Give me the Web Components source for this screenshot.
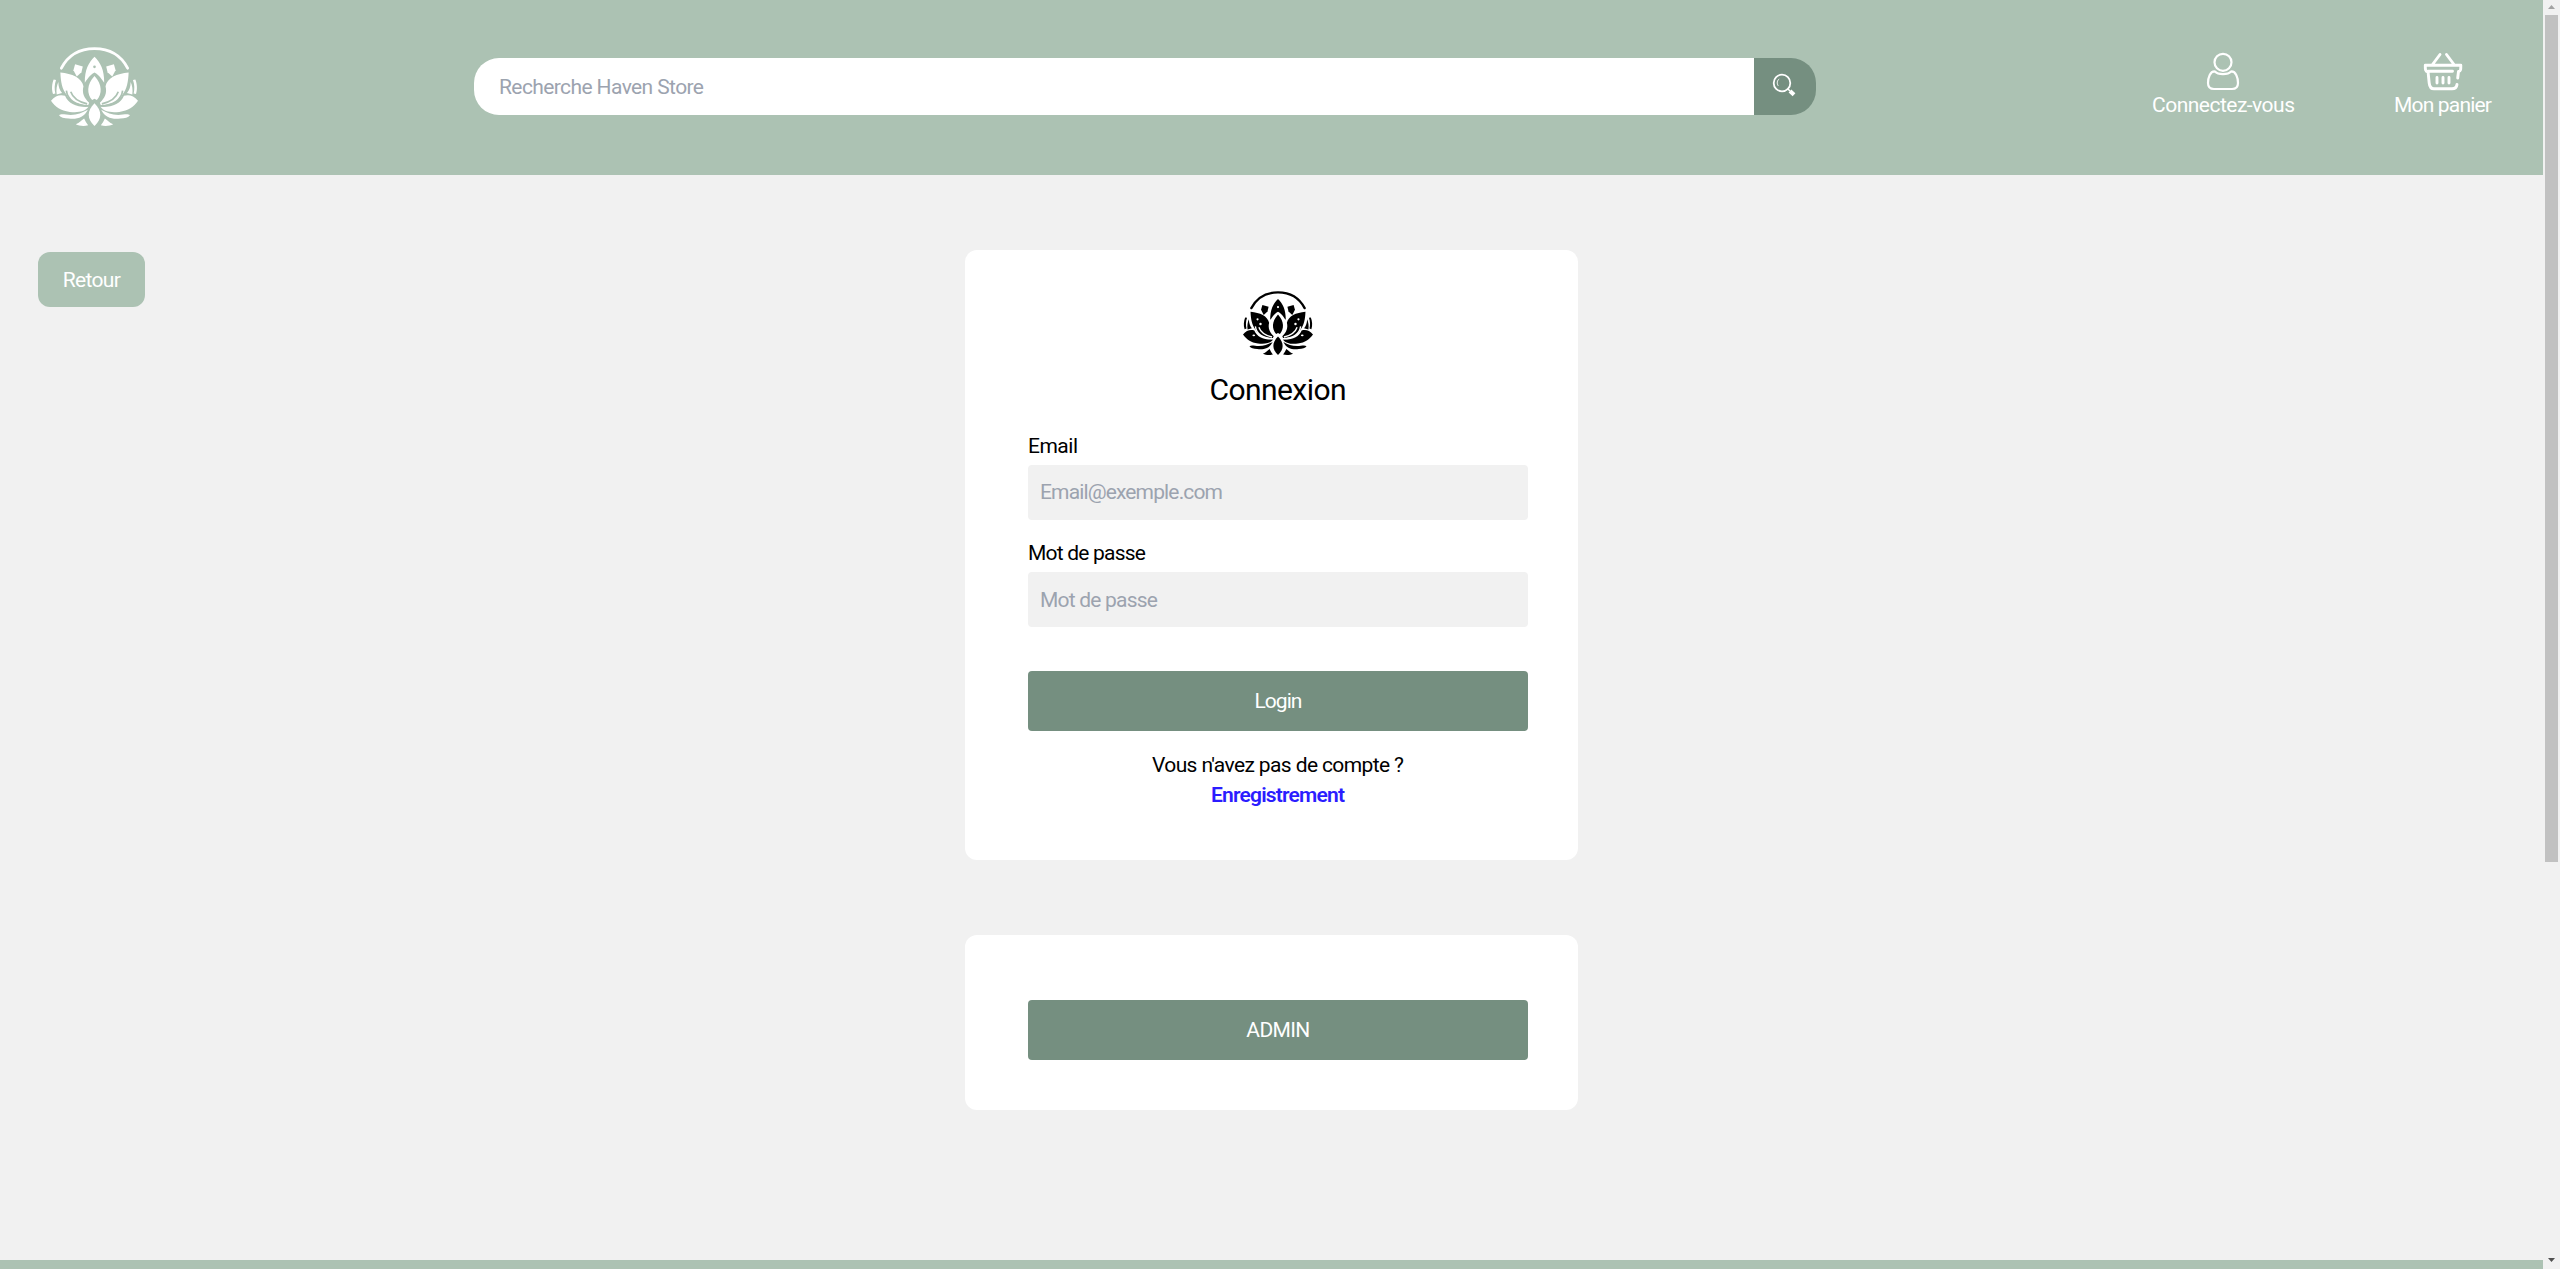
<!DOCTYPE html>
<html lang="fr">
<head>
<meta charset="utf-8">
<title>Haven Store</title>
<style>
html,body{margin:0;height:100%;overflow:hidden;background:#f1f1f1}
body{font-family:Roboto,"Liberation Sans",sans-serif;font-size:21px;line-height:30px;color:#000;--sage:#acc2b3;--moss:#758f80;--pale:#f1f1f1}
</style>
</head>
<body>
<haven-app></haven-app>
<script>
const define = (name, html, init) => customElements.define(name, class extends HTMLElement {
  connectedCallback() {
    if (this.shadowRoot) return;
    this.attachShadow({mode: 'open'}).innerHTML = html;
    if (init) init.call(this);
  }
});

// One line of text, tracked so that its letters span the given width.
define('fit-text', `<style>:host{display:block;white-space:nowrap;height:30px;flex:none}span{display:inline-block}</style><span><slot></slot></span>`, function () {
  const s = this.shadowRoot.querySelector('span');
  const n = this.textContent.length, w = +this.getAttribute('width');
  this.style.width = w + 'px';
  s.style.letterSpacing = (w - s.getBoundingClientRect().width) / (n - 1) + 'px';
});

define('lotus-logo', `<style>:host{display:block;flex:none}svg{display:block;width:100%;height:100%}</style>
<svg viewBox="35 36 260 235" preserveAspectRatio="none" fill="currentColor">
<defs>
<mask id="m" maskUnits="userSpaceOnUse" x="0" y="0" width="330" height="300"><rect width="330" height="300" fill="#fff"/>
<g fill="none" stroke="#000" stroke-width="5"><path d="M81 166C84 192 107 210 147 211"/><path d="M94 169C100 187 117 199 143 205"/></g>
<circle cx="89" cy="140" r="4"/><circle cx="100" cy="157" r="4.5"/><ellipse cx="75" cy="199" rx="5" ry="3"/></mask>
<g id="h"><g mask="url(#m)">
<path d="M63 112C98 115 127 128 132 153C127 173 134 188 149 202L146 209C117 208 91 199 82 178C68 162 64 139 63 112Z"/>
<path d="M35 196C48 180 62 177 77 181C86 204 112 216 147 214C137 229 114 232 91 229C64 226 48 214 35 196Z"/></g>
<path d="M107 87L130 94L126 111L112 124L102 105Z"/>
<path d="M41 176C36 162 38 145 43 133L50 134C45 148 45 162 48 174Z"/>
<path d="M57 140C57 155 61 164 68 173L52 177C50 163 52 151 57 140Z"/>
<path d="M59 239C66 233 78 238 94 238C114 238 128 232 145 223C134 247 111 252 88 249C74 248 64 246 59 239Z"/>
<path d="M109 266C121 262 125 254 134 249C137 256 141 263 146 269C134 272 119 271 109 266Z"/></g>
</defs>
<path d="M66 99C87 59 124 41 165 41S243 59 264 99" fill="none" stroke="currentColor" stroke-width="8.5" stroke-linecap="round"/>
<path fill-rule="evenodd" d="M165 65C147 83 136 103 136 142C145 132 146 123 165 112C184 123 185 132 194 142C194 103 183 83 165 65ZM165 91a4 4 0 1 1 0 8a4 4 0 0 1 0-8Z"/>
<path d="M165 122C141 148 142 175 158 194L165 190L172 194C188 175 189 148 165 122Z"/>
<path d="M165 203C142 226 142 250 165 271C188 250 188 226 165 203Z"/>
<use href="#h"/><use href="#h" transform="matrix(-1 0 0 1 330 0)"/>
</svg>`);

define('search-bar', `<style>:host{display:flex;width:1342px;height:57px;border-radius:25px;overflow:hidden}
.f{flex:1;background:#fff;color:#9ca3af;padding:14px 0 0 25px}
button{width:62px;border:0;padding:0 2px 3px 0;background:var(--moss);color:#fff;display:grid;place-items:center}svg{display:block}</style>
<div class="f"><fit-text width="205">Recherche Haven Store</fit-text></div>
<button aria-label="Rechercher"><svg width="24" height="24" viewBox="0 0 24 24" fill="none" stroke="#fff"><circle cx="10" cy="10" r="8.3" stroke-width="1.8"/><path d="M6.2 12.8C4.5 10 5.3 7.2 7.2 6" stroke-width="1"/><path d="M15.5 15.5L18 18" stroke-width="1.5"/><path d="M18 18L22 21.7" stroke-width="4"/></svg></button>`);

define('nav-link', `<style>:host{display:flex;flex-direction:column;align-items:center;color:#fff}::slotted(svg){display:block;margin:0 1px -1px 0}</style><slot name="icon"></slot><slot></slot>`);

define('site-header', `<style>:host{display:flex;box-sizing:border-box;height:175px;background:var(--sage);align-items:flex-start}
lotus-logo{width:87px;height:79px;margin:47px 336px 0 51px;color:#fff}search-bar{margin-top:58px}
nav{display:flex;gap:99px;margin:52px 0 0 336px}</style>
<lotus-logo></lotus-logo><search-bar></search-bar>
<nav><nav-link><svg slot="icon" width="34" height="39" viewBox="0 0 34 39" fill="none" stroke="#fff" stroke-width="2.2"><circle cx="17" cy="10.3" r="8.5"/><path d="M9 19.5C12 23 22 23 25 19.5C30 19 32 26 32 31C32 35 30 37 26 37H8C4 37 2 35 2 31C2 26 4 19 9 19.5Z" stroke-linejoin="round"/></svg><fit-text width="143">Connectez-vous</fit-text></nav-link>
<nav-link><svg slot="icon" width="40" height="39" viewBox="0 0 40 39" fill="none" stroke="#fff" stroke-width="2.9" stroke-linecap="round" stroke-linejoin="round"><path d="M17 2.5L9.5 12.5M23.5 2.5L31 12.5M5 20C2 19.5 2.3 17 2.3 13.3H37.8C37.8 16.5 38 19.5 35.5 19.5L34.7 26M29.5 19.3H5L6.2 31C6.6 35 7.8 36.8 11 36.8H29C32 36.8 33.6 35.8 34 32.5"/><path d="M14 25.5V31M20 25.5V31M26 25.5V31"/></svg><fit-text width="98">Mon panier</fit-text></nav-link></nav>`);

define('panel-card', `<style>:host{display:flex;flex-direction:column;align-items:center;box-sizing:border-box;width:613px;background:#fff;border-radius:12px;padding:0 50px 0 63px}</style><slot></slot>`);

define('form-field', `<style>:host{display:block;width:500px;flex:none}.i{height:55px;box-sizing:border-box;background:var(--pale);border-radius:4px;color:#9ca3af;padding:12px 12px;margin-top:4px}:host(.second) .i{padding-top:13px}</style><slot name="label"></slot><div class="i"><slot></slot></div>`);

define('main-button', `<style>:host{display:block;width:500px;flex:none}button{display:flex;width:100%;height:60px;align-items:center;justify-content:center;border:0;padding:0;border-radius:4px;background:var(--moss);color:#fff;font:inherit}</style><button><slot></slot></button>`);

define('back-button', `<style>:host{display:block;width:107px}button{width:107px;height:55px;display:flex;align-items:center;justify-content:center;border:0;padding:0;border-radius:12px;background:var(--sage);color:#fff;font:inherit}</style><button><slot></slot></button>`);

define('page-scrollbar', `<style>:host{display:flex;flex-direction:column;align-items:center;width:17px;height:100%;background:#f1f1f1;box-sizing:border-box}
svg{display:block;flex:none}.t{width:13px;height:847px;background:#c1c1c1;margin-bottom:auto}</style>
<svg width="17" height="15"><path d="M5 9L8.5 5L12 9Z" fill="#a3a3a3"/></svg><div class="t"></div><svg width="17" height="15"><path d="M5 4L8.5 8L12 4Z" fill="#505050"/></svg>`);

define('haven-app', `<style>:host{display:flex;height:1269px;width:2560px}
.page{width:2543px;display:flex;flex-direction:column}
.body{flex:1;display:grid;grid-template-columns:1fr 613px 1fr;align-items:start}
back-button{margin:77px 0 0 38px}
.cards{display:flex;flex-direction:column;gap:75px;padding-top:75px}
.login{height:610px}.admin{height:175px;padding-top:65px}
lotus-logo{width:70px;height:64px;margin-top:41px}
h1{margin:15px 0 0;font-size:30px;line-height:40px;height:40px;font-weight:400}
form-field{margin-top:18px}.first{margin-top:21px}
main-button.l{margin:44px 0 19px}
.link{color:#2b1dff;font-weight:600}
footer{height:9px;background:var(--sage)}</style>
<div class="page"><site-header></site-header>
<div class="body"><back-button><fit-text width="58">Retour</fit-text></back-button>
<div class="cards"><panel-card class="login"><lotus-logo></lotus-logo>
<h1><fit-text width="137">Connexion</fit-text></h1>
<form-field class="first"><fit-text slot="label" width="50">Email</fit-text><fit-text width="183">Email@exemple.com</fit-text></form-field>
<form-field class="second"><fit-text slot="label" width="118">Mot de passe</fit-text><fit-text width="118">Mot de passe</fit-text></form-field>
<main-button class="l"><fit-text width="48">Login</fit-text></main-button>
<fit-text width="252">Vous n'avez pas de compte ?</fit-text>
<fit-text class="link" width="134">Enregistrement</fit-text></panel-card>
<panel-card class="admin"><main-button><fit-text width="64">ADMIN</fit-text></main-button></panel-card></div><div></div></div>
<footer></footer></div><page-scrollbar></page-scrollbar>`);
</script>
</body>
</html>
